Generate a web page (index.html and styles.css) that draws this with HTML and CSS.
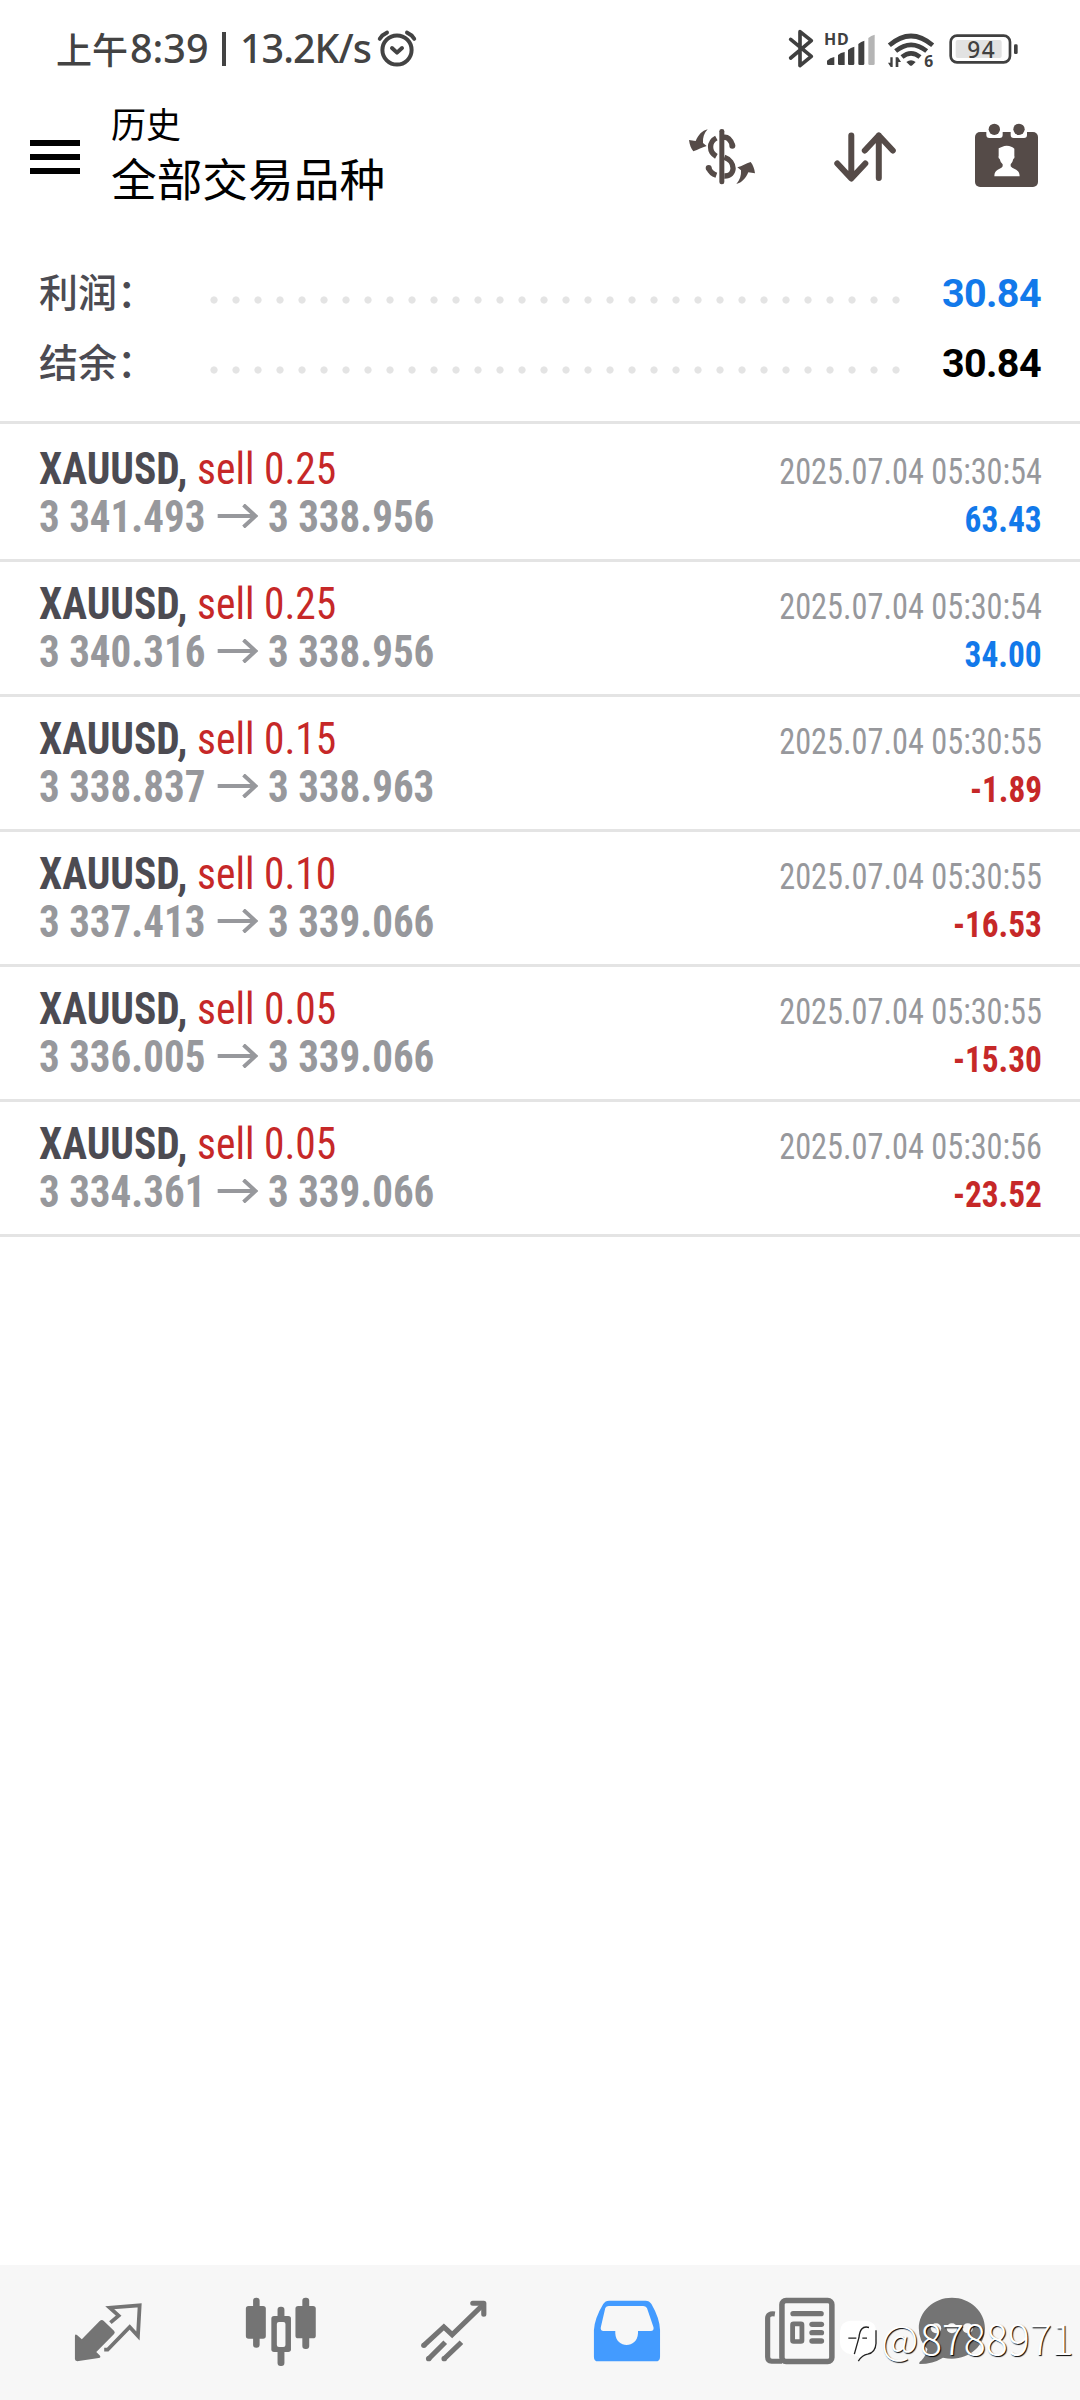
FILE: index.html
```html
<!DOCTYPE html>
<html lang="zh-CN">
<head>
<meta charset="utf-8">
<title>历史</title>
<link rel="stylesheet" href="styles.css">
</head>
<body>
<div class="status">
  <div class="status-left">
    <span class="ampm">上午</span><span class="clock">8:39</span><i class="bar"></i><span class="speed">13.2K/s</span>
    <svg class="alarm" viewBox="0 0 42 42" fill="none" stroke="#434343" stroke-width="4" stroke-linecap="round" stroke-linejoin="round"><circle cx="21" cy="22" r="14.6"/><path d="M3.8 10.8Q6.5 6.5 11 4.6M38.2 10.8Q35.500 6.500 31 4.600M16 20l5 4.600 5-4.600"/></svg>
  </div>
  <svg class="status-icons" viewBox="0 0 720 180" fill="#404040">
    <path d="M32 58L94 109 60 137V35L94 62 32 114" fill="none" stroke="#404040" stroke-width="11" stroke-linecap="round" stroke-linejoin="round"/>
    <text x="132" y="75" font-size="48" font-weight="700" textLength="74">HD</text>
    <path d="M141 122q9-9 22-11v24h-18q-4 0-4-4zM174 105q8-7 20-9v39h-16q-4 0-4-4zM204 90q8-8 19-10v51q0 4-4 4h-11q-4 0-4-4zM235 72q8-8 18-10v69q0 4-4 4h-10q-4 0-4-4z"/>
    <path fill="#b5b5b5" d="M265 54q8-8 19-10v87q0 4-4 4h-11q-4 0-4-4z"/>
    <g fill="none" stroke="#404040" stroke-width="14"><path d="M328 76Q393 20 458 76M347 93Q393 56 440 93M366 111Q393 89 420 111"/></g>
    <path d="M379 126q14-10 28 0l-10 10q-4 3-8 0zM338 112v29h-6l-8-13h7v-16zM347 141v-29h7l9 14h-8v15z"/>
    <text x="433" y="141" font-size="47" font-weight="700">6</text>
    <rect x="512" y="47" width="178" height="80" rx="19" fill="none" stroke="#404040" stroke-width="8"/>
    <rect x="527" y="60" width="138" height="54" rx="6" fill="#e2e2e2"/>
    <rect x="702" y="73" width="11" height="29" rx="4"/>
    <text x="562" y="113" font-size="68" font-weight="500" textLength="82">94</text>
  </svg>
</div>

<header class="header">
  <div class="menu"><i></i><i></i><i></i></div>
  <div class="titles"><div class="title">历史</div><div class="subtitle">全部交易品种</div></div>
  <svg class="tool" viewBox="0 0 270 240" fill="#554b48">
    <rect x="118" y="42" width="15" height="166" rx="7"/>
    <g fill="none" stroke="#554b48" stroke-width="16"><path d="M109 69C86 81 86 111 109 124M131 67C144 65 152 76 157 89M133 127C168 139 168 184 133 183" /><path d="M109 181C97 177 90 170 86 160"/></g>
    <circle cx="157" cy="92" r="9"/><circle cx="86" cy="159" r="9"/>
    <path id="swoop" d="M27 75L47 78C55 60 66 47 83 43C72 55 68 68 69 84L80 93C65 97 55 104 40 109C33 100 29 90 27 75Z"/>
    <use href="#swoop" transform="rotate(180 126 125)"/>
  </svg>
  <svg class="tool tool-sort" viewBox="0 0 90 80" fill="none" stroke="#554b48" stroke-width="6" stroke-linecap="round" stroke-linejoin="round"><path d="M31.300 20.500V63M17.300 48.500L31.300 63.500 45.300 48.500M58.800 63V20.500M44.800 35.500L58.800 20.500 72.800 35.500"/></svg>
  <svg class="tool tool-calendar" viewBox="0 0 270 240" fill="#554b48">
    <rect x="45" y="51" width="189" height="165" rx="15"/>
    <path fill="#fff" d="M79 40H128V60Q128 69 119 69H88Q79 69 79 60ZM152 40H201V60Q201 69 192 69H161Q152 69 152 60Z"/>
    <circle cx="103" cy="43" r="17"/><circle cx="177" cy="43" r="17"/>
    <path fill="#fff" d="M116 100C124 97 130 92 140 92C151 92 158 96 163 101V122Q165 130 160 132Q158 142 152 148V154C160 165 179 161 179 184H103C103 161 122 165 128 154V148Q121 142 119 132Q114 130 116 122Z"/>
  </svg>
</header>

<section class="summary">
  <div class="sum"><span class="sum-label">利润：</span><i class="dots"></i><b class="sum-value up">30.84</b></div>
  <div class="sum"><span class="sum-label">结余：</span><i class="dots"></i><b class="sum-value">30.84</b></div>
</section>

<main class="deals">
  <article class="deal"><div class="line"><div class="name"><b>XAUUSD, </b>sell 0.25</div><time>2025.07.04 05:30:54</time></div><div class="line"><div class="price">3 341.493<svg viewBox="0 0 45 24"><path d="M1 12H42M29 1L42 12 29 23"/></svg>3 338.956</div><b class="gain up">63.43</b></div></article>
  <article class="deal"><div class="line"><div class="name"><b>XAUUSD, </b>sell 0.25</div><time>2025.07.04 05:30:54</time></div><div class="line"><div class="price">3 340.316<svg viewBox="0 0 45 24"><path d="M1 12H42M29 1L42 12 29 23"/></svg>3 338.956</div><b class="gain up">34.00</b></div></article>
  <article class="deal"><div class="line"><div class="name"><b>XAUUSD, </b>sell 0.15</div><time>2025.07.04 05:30:55</time></div><div class="line"><div class="price">3 338.837<svg viewBox="0 0 45 24"><path d="M1 12H42M29 1L42 12 29 23"/></svg>3 338.963</div><b class="gain down">-1.89</b></div></article>
  <article class="deal"><div class="line"><div class="name"><b>XAUUSD, </b>sell 0.10</div><time>2025.07.04 05:30:55</time></div><div class="line"><div class="price">3 337.413<svg viewBox="0 0 45 24"><path d="M1 12H42M29 1L42 12 29 23"/></svg>3 339.066</div><b class="gain down">-16.53</b></div></article>
  <article class="deal"><div class="line"><div class="name"><b>XAUUSD, </b>sell 0.05</div><time>2025.07.04 05:30:55</time></div><div class="line"><div class="price">3 336.005<svg viewBox="0 0 45 24"><path d="M1 12H42M29 1L42 12 29 23"/></svg>3 339.066</div><b class="gain down">-15.30</b></div></article>
  <article class="deal"><div class="line"><div class="name"><b>XAUUSD, </b>sell 0.05</div><time>2025.07.04 05:30:56</time></div><div class="line"><div class="price">3 334.361<svg viewBox="0 0 45 24"><path d="M1 12H42M29 1L42 12 29 23"/></svg>3 339.066</div><b class="gain down">-23.52</b></div></article>
</main>

<nav class="tabs">
  <svg viewBox="198.900 135 232.300 228" preserveAspectRatio="none" fill="#747474">
    <path d="M219 257Q220 251 225 255L239 268 291 213Q297 207 303 213L333 243Q337 248 332 253L281 306 292 317Q295 323 288 324L230 333Q219 335 219 327Z"/>
    <path d="M322 218L346 197 320 173 407 166 402 258 378 231 314 299 304 299" fill="none" stroke="#747474" stroke-width="11"/>
  </svg>
  <svg viewBox="699.900 135 232.300 228" preserveAspectRatio="none" fill="#747474">
    <rect x="735" y="143" width="19" height="150" rx="9"/><rect x="714" y="168" width="58" height="98" rx="8"/>
    <rect x="878" y="143" width="20" height="154" rx="9"/><rect x="858" y="168" width="59" height="97" rx="8"/>
    <rect x="806" y="170" width="20" height="50" rx="9"/><rect x="806" y="290" width="20" height="58" rx="9"/><rect x="788" y="198" width="57" height="108" rx="8"/><rect x="804" y="216" width="25" height="75" rx="6" fill="#f7f7f7"/>
  </svg>
  <svg viewBox="1202.300 135 232.300 228" preserveAspectRatio="none" fill="none" stroke="#747474" stroke-width="15">
    <path d="M1231 286L1289 231 1313 254 1405 162"/><path d="M1373 160H1405V193" stroke-linecap="round" stroke-linejoin="round"/>
    <path d="M1245 326L1293 277M1290 326L1340 277"/><g fill="#747474" stroke="none"><circle cx="1231" cy="286" r="8"/><circle cx="1245" cy="326" r="8"/><circle cx="1290" cy="326" r="8"/></g>
  </svg>
  <svg viewBox="137.900 135 232.300 228" preserveAspectRatio="none" fill="#439bff">
    <path fill-rule="evenodd" d="M202 152H308Q319 152 325 162Q349 205 350 240V320Q350 334 337 334H170Q158 334 158 320V240Q160 205 185 162Q191 152 202 152ZM201 168Q194 168 191 174L178 232Q176 243 186 243H220V250C222 297 284 297 286 250V243H323Q333 243 331 232L312 174Q308 168 301 168Z"/>
  </svg>
  <svg viewBox="641.800 135 232.300 228" preserveAspectRatio="none" fill="#747474">
    <path d="M685 192Q664 189 664 205V321Q664 333 676 334H706" fill="none" stroke="#747474" stroke-width="15"/>
    <rect x="705.500" y="151.500" width="145" height="183" rx="12" fill="none" stroke="#747474" stroke-width="16"/>
    <rect x="730" y="183" width="97" height="16" rx="8"/><rect x="785" y="215" width="43" height="16" rx="8"/><rect x="785" y="240" width="43" height="16" rx="8"/><rect x="785" y="265" width="43" height="16" rx="8"/>
    <rect x="736.500" y="221.500" width="27" height="53" rx="3" fill="none" stroke="#747474" stroke-width="14"/>
  </svg>
  <svg class="chat" viewBox="1083.200 135 232.300 228" preserveAspectRatio="none" fill="#747474">
    <path d="M1199 143C1252 143 1295 184 1295 235S1252 326 1199 326Q1187 326 1173 323Q1144 342 1105 342Q1102 337 1110 332Q1125 316 1128 297Q1103 273 1103 235C1103 184 1146 143 1199 143Z"/>
    <g fill="#f7f7f7"><circle cx="1153" cy="235" r="15"/><circle cx="1199" cy="235" r="15"/><circle cx="1245" cy="235" r="15"/></g>
  </svg>
</nav>

<div class="watermark">
  <svg viewBox="0 0 120 140"><path fill="#fff" d="M34 8H82Q111 10 111 40V76Q109 104 86 108Q72 110 66 121Q55 112 34 108Q4 102 3 74V40Q6 10 34 8Z"/><path d="M111 36V76Q109 104 86 108Q70 110 58 129M28 60H52M70 60H84M90 28C70 22 62 36 60 58L46 108" fill="none" stroke="#222" stroke-width="4"/></svg>
  <span class="at">@</span><span>8788971</span>
</div>
</body>
</html>
```
FILE: styles.css
```css
* { box-sizing: border-box; }

body {
  margin: 0;
  width: 1080px;
  height: 2400px;
  background: #fff;
  color: #000;
  font-family: Roboto, "Noto Sans CJK SC", sans-serif;
  display: flex;
  flex-direction: column;
  position: relative;
  overflow: hidden;
}
svg { display: block; flex: none; }
i { display: block; }

.status {
  height: 90px;
  padding: 20px 60px 0 56px;
  display: flex;
  align-items: flex-start;
  justify-content: space-between;
  color: #434343;
}
.status-left {
  display: flex;
  align-items: center;
  height: 60px;
  font: 500 39.500px/57px "Noto Sans", sans-serif;
}
.status-left span { height: 60px; }
.ampm { font: 500 36px/57px "Noto Sans CJK SC", sans-serif; width: 74px; }
.clock { width: 92px; }
.bar { width: 4px; height: 34px; background: #434343; margin: 0 14px 2px 0; }
.speed { letter-spacing: -1px; width: 136px; }
.alarm { width: 42px; height: 42px; margin-top: -2px; }
.status-icons { width: 240px; height: 60px; font-family: "Noto Sans", sans-serif; }

.header {
  height: 132px;
  padding-left: 30px;
  display: flex;
  align-items: flex-start;
}
.menu { width: 50px; margin-top: 50px; display: grid; gap: 8px; }
.menu i { height: 6px; background: #000; }
.titles { width: 569px; margin: 11px 0 0 31px; font-family: "Noto Sans CJK SC", sans-serif; }
.title { font-size: 35px; line-height: 44px; }
.subtitle { font-size: 45.700px; line-height: 56px; margin-top: 4px; }
.tool { width: 90px; height: 80px; margin-top: 25px; }
.tool-sort { margin-left: 50px; }
.tool-calendar { margin-left: 50px; }

.summary { height: 202px; padding: 35px 39px 0; border-bottom: 3px solid #e4e4e4; }
.sum { display: flex; align-items: center; height: 70px; }
.sum-label {
  width: 163.500px;
  margin-top: -4px;
  font: 500 39px/70px "Noto Sans CJK SC", sans-serif;
  color: #4c4b52;
}
.dots {
  width: 704px;
  height: 8px;
  margin-top: 16px;
  background: radial-gradient(circle at 11px 4px, #e4e4e4 3.200px, transparent 4px) 0 0 / 22px 8px repeat-x;
}
.sum-value { margin: 3px 0 0 auto; font-size: 39.500px; letter-spacing: -.6px; line-height: 72px; }
.up { color: #1279ea; }
.down { color: #c62828; }

.deals { font-family: "Roboto Condensed", Roboto, sans-serif; }
.deal { padding: 18px 38px 18px 39px; border-bottom: 3px solid #e4e4e4; }
.deal:first-child { padding-top: 21px; }
.line { display: flex; justify-content: space-between; align-items: baseline; height: 48px; line-height: 48px; }
.name, .price { font-size: 44.500px; white-space: pre; transform: scaleX(.932); transform-origin: left; }
.name { color: #c62828; }
.name b { color: #4c4b52; }
.price { color: #97989c; font-weight: 700; transform: scaleX(.921); }
.price svg { display: inline-block; width: 45px; height: 24px; margin: 0 11px 0 12px; vertical-align: 4px; fill: none; stroke: #97989c; stroke-width: 4.200; }
time { font-size: 37px; color: #97989c; transform: scaleX(.873); transform-origin: right; }
.gain { font-size: 37px; transform: scaleX(.9); transform-origin: right; }

.tabs {
  height: 135px;
  margin-top: auto;
  padding: 30px 0 0 68px;
  display: flex;
  gap: 93.100px;
  background: #f7f7f7;
}
.tabs svg { width: 80px; height: 76px; }
.tabs .chat { margin-left: -21px; }

.watermark {
  position: absolute;
  left: 839px;
  top: 2318px;
  display: flex;
  align-items: flex-start;
  color: #fff;
  font: 300 41px/38px "Noto Sans CJK SC", sans-serif;
  text-shadow: 1px 1px 1px #000;
}
.watermark svg { width: 40px; height: 47px; }
.at { width: 41px; padding-left: 2px; }
```
